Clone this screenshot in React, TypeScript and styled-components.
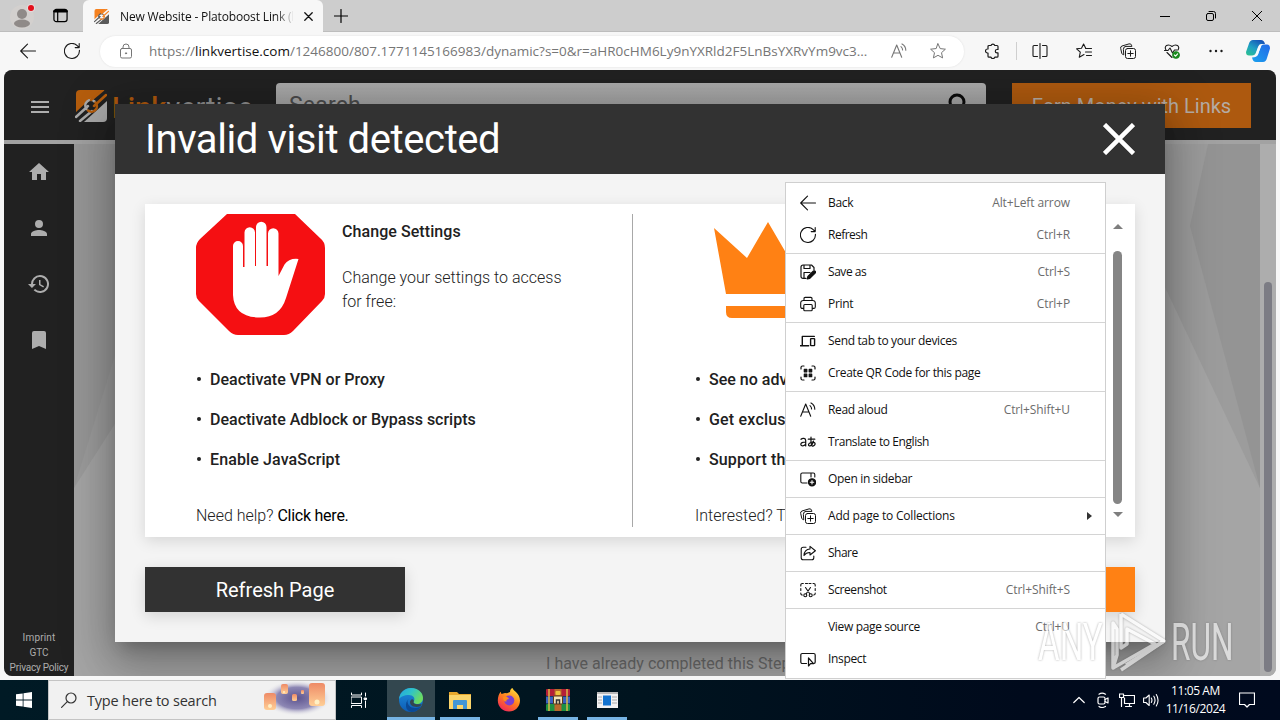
import * as React from 'react';
import styled, { createGlobalStyle, css } from 'styled-components';

/* ==================== [Style] ==================== */
const GlobalStyle=createGlobalStyle`
    *{
        box-sizing: border-box;
    }
    body{
        margin: 0;
        overflow: hidden;
        background-color: #f7f7f7;
        font-family: "Open Sans", "Noto Sans", sans-serif;
    }
    svg{
        display: block;
        flex: none;
    }
`;

const Screen=styled.div`
    position: relative;
    display: flex;
    flex-direction: column;
    width: 1280px;
    height: 720px;
    overflow: hidden;
`;

const Label=styled.span<{ $ls?: number }>`
    white-space: pre;
    letter-spacing: ${({ $ls=0 })=>$ls}px;
`;

const Slot=styled.div<{ $w: number }>`
    display: flex;
    flex: none;
    justify-content: center;
    align-items: center;
    width: ${({ $w })=>$w}px;
    height: 100%;
`;

/* ---------- tab strip ---------- */
const TabStrip=styled.div`
    display: flex;
    align-items: center;
    height: 32px;
    background-color: #cdcdcd;
    border-bottom: 1px solid #bdbdbd;
`;

const Tab=styled.div`
    display: flex;
    align-items: center;
    align-self: flex-start;
    width: 240px;
    height: 32px;
    padding: 0 9px 0 11px;
    border-radius: 6px 6px 0 0;
    background-color: #f7f7f7;
    color: #111111;
    font-size: 12px;
`;

const TabTitle=styled(Label)`
    width: 173px;
    margin: 0 11px 0 11px;
    overflow: hidden;
    mask-image: linear-gradient(90deg, #000 155px, transparent 175px);
`;

const Spacer=styled.div`
    flex: 1;
`;

/* ---------- toolbar ---------- */
const Toolbar=styled.div`
    display: flex;
    align-items: center;
    height: 38px;
    padding-left: 6px;
    background-color: #f7f7f7;
    color: #1b1b1b;
`;

const AddressBar=styled.div`
    display: flex;
    align-items: center;
    width: 864px;
    height: 31px;
    margin: 0 7px 0 6px;
    padding-left: 6px;
    border-radius: 16px;
    background-color: #ffffff;
    box-shadow: 0 0 2px #dddddd;
    color: #767676;
    font-size: 13.5px;
    b{
        color: #111111;
        font-weight: 400;
    }
`;

const Url=styled(Label)`
    width: 730px;
    margin-left: 3px;
`;

const ToolbarRule=styled.div`
    width: 1px;
    height: 18px;
    margin: 0 1px;
    background-color: #cfcfcf;
`;

/* ---------- web page ---------- */
const Viewport=styled.div`
    position: relative;
    display: flex;
    flex-direction: column;
    height: 606px;
    margin: 0 4px 4px;
    border-radius: 8px;
    overflow: hidden;
    background-color: #a5a5a5;
    font-family: Roboto, sans-serif;
`;

const SiteHeader=styled.header`
    display: flex;
    align-items: center;
    height: 70px;
    padding-top: 1px;
    background-color: #212121;
`;

const Brand=styled.div`
    display: flex;
    align-items: center;
    width: 201px;
    color: #8e8e8e;
    font-size: 29px;
    b{
        color: #ad580e;
        font-weight: 500;
    }
`;

const BrandName=styled(Label)`
    margin-left: 5px;
    padding-top: 5px;
`;

const SearchField=styled.div`
    display: flex;
    justify-content: space-between;
    width: 710px;
    height: 45px;
    padding: 9px 17px 0 13px;
    border-radius: 4px;
    background: linear-gradient(#aaaaaa, #989898);
    color: #4b4b4b;
    font-size: 23px;
    line-height: 27px;
`;

const EarnButton=styled.button`
    width: 239px;
    height: 45px;
    margin-left: 26px;
    padding: 0;
    border: 0;
    background-color: #ad590f;
    color: #b5aca4;
    font-family: inherit;
    font-size: 20px;
`;

const ProgressStrip=styled.div`
    height: 4px;
    background-color: #a2a2a2;
`;

const Main=styled.div`
    display: flex;
    flex: 1;
`;

const Sidebar=styled.nav`
    display: flex;
    flex-direction: column;
    align-items: center;
    width: 70px;
    color: #adadad;
    background-color: #212121;
`;

const SideItem=styled.div`
    display: grid;
    place-items: center;
    height: 56px;
`;

const SideLink=styled.a`
    font-size: 10px;
    line-height: 15px;
    white-space: nowrap;
`;

const Canvas=styled.div`
    display: flex;
    flex: 1;
    flex-direction: column;
    justify-content: flex-end;
    background-color: #a5a5a5;
    position: relative;
    color: #6a6a6a;
    font-size: 16px;
`;

const Backdrop=styled.svg`
    position: absolute;
    inset: 0;
`;

const StepNote=styled.div`
    position: relative;
    padding: 0 0 3px 472px;
    line-height: 19px;
`;

const PageScroll=styled.div`
    display: flex;
    justify-content: center;
    width: 16px;
    padding-top: 138px;
    background-color: #adadad;
`;

const Thumb=styled.div<{ $w: number; $h: number; $color: string }>`
    width: ${({ $w })=>$w}px;
    height: ${({ $h })=>$h}px;
    border-radius: 5px;
    background-color: ${({ $color })=>$color};
`;

/* ---------- dialog ---------- */
const Dialog=styled.section`
    position: absolute;
    top: 34px;
    left: 111px;
    width: 1050px;
    height: 538px;
    background-color: #f4f4f4;
    box-shadow: 0 11px 15px -7px rgba(0,0,0,.2), 0 24px 38px 3px rgba(0,0,0,.14), 0 9px 46px 8px rgba(0,0,0,.22);
`;

const DialogHead=styled.div`
    display: flex;
    justify-content: space-between;
    align-items: center;
    height: 70px;
    padding: 0 30px;
    background-color: #323232;
    color: #ffffff;
    font-size: 40px;
`;

const DialogBody=styled.div`
    padding: 30px;
`;

const Card=styled.div`
    display: flex;
    height: 333px;
    padding: 10px;
    background-color: #ffffff;
    box-shadow: 0 4px 14px rgba(0,0,0,.12);
    color: #212121;
    font-size: 16px;
    font-weight: 300;
`;

const Choice=styled.div<{ $w: number; $pad: number }>`
    width: ${({ $w })=>$w}px;
    padding-left: ${({ $pad })=>$pad}px;
`;

const Hero=styled.div`
    display: flex;
    height: 121px;
    margin-bottom: 24px;
`;

const HeroText=styled.div`
    padding: 6px 0 0 17px;
    line-height: 24px;
    p{
        margin: 22px 0 0;
    }
`;

const Strong=styled(Label)`
    font-weight: 500;
`;

const Points=styled.ul`
    margin: 0;
    padding: 0;
    list-style: none;
    li{
        display: flex;
        align-items: center;
        height: 40px;
    }
    li::before{
        content: "";
        width: 4px;
        height: 4px;
        margin: 0 9px 0 1px;
        border-radius: 50%;
        background-color: #212121;
    }
`;

const Help=styled.div`
    margin-top: 25px;
    line-height: 24px;
    white-space: nowrap;
    a{
        color: #000000;
        font-weight: 400;
        letter-spacing: -0.25px;
    }
`;

const Divider=styled.div`
    width: 1px;
    background-color: #a8a8a8;
`;

const CardScroll=styled.div`
    display: flex;
    flex-direction: column;
    align-items: center;
    width: 15px;
    margin-left: auto;
    padding-top: 10px;
`;

const Arrow=styled.i<{ $down?: boolean }>`
    border: 5px solid transparent;
    ${({ $down })=>$down
        ? css`border-top-color: #7e7e7e; border-bottom-width: 0; margin-top: 8px;`
        : css`border-bottom-color: #7e7e7e; border-top-width: 0; margin-bottom: 22px;`}
`;

const Actions=styled.div`
    display: flex;
    justify-content: space-between;
    margin-top: 30px;
`;

const ActionButton=styled.button<{ $bg: string }>`
    width: 260px;
    height: 45px;
    padding: 0;
    border: 0;
    background-color: ${({ $bg })=>$bg};
    box-shadow: 0 4px 14px rgba(0,0,0,.14);
    color: #ffffff;
    font-family: inherit;
    font-size: 20px;
`;

/* ---------- context menu ---------- */
const Menu=styled.div`
    position: absolute;
    top: 182px;
    left: 785px;
    width: 321px;
    height: 497px;
    padding: 4px 0;
    border: 1px solid #cfcfcf;
    background-color: #ffffff;
    color: #111111;
    font-size: 12px;
`;

const MenuRow=styled.div`
    display: flex;
    align-items: center;
    height: 32px;
    padding: 0 35px 0 14px;
`;

const MenuIcon=styled.div`
    width: 28px;
`;

const MenuLabel=styled(Label)`
    padding-bottom: 2px;
`;

const Shortcut=styled(Label)`
    margin-left: auto;
    padding-bottom: 2px;
    color: #6c6c6c;
`;

const SubArrow=styled.i`
    margin-left: auto;
    margin-right: -26px;
    border: 4px solid transparent;
    border-left: 5px solid #333333;
`;

const MenuRule=styled.div`
    height: 5px;
    padding-top: 2px;
    &::before{
        content: "";
        display: block;
        height: 1px;
        background-color: #d4d4d4;
    }
`;

/* ---------- taskbar ---------- */
const Taskbar=styled.div`
    display: flex;
    align-items: center;
    height: 40px;
    background: linear-gradient(90deg, #001a25, #00141f 50%, #000a1c 80%, #000a1e);
    color: #ffffff;
`;

const TaskSearch=styled.div`
    display: flex;
    align-items: center;
    width: 288px;
    height: 40px;
    padding-left: 12px;
    border: 1px solid #c4c4c4;
    background-color: #f1f1f1;
    color: #333333;
    font-size: 14.5px;
`;

const TaskApp=styled.div<{ $active?: boolean; $line?: boolean }>`
    display: flex;
    justify-content: center;
    align-items: center;
    width: ${({ $active })=>$active ? 48 : 40}px;
    height: 40px;
    margin: 0 ${({ $active })=>$active ? 5 : 9}px 0 0;
    padding-top: ${({ $line })=>$line ? 3 : 0}px;
    border-bottom: ${({ $line })=>$line ? '3px solid #76b4e4' : '0'};
    background-color: ${({ $active })=>$active ? '#33474f' : 'transparent'};
`;

const Clock=styled.div`
    width: 65px;
    font-size: 12px;
    line-height: 18px;
    text-align: center;
`;

/* ---------- watermark ---------- */
const Watermark=styled.div`
    position: absolute;
    top: 610px;
    left: 1038px;
    display: flex;
    align-items: center;
    width: 200px;
    height: 62px;
    opacity: .6;
    color: #ffffff;
    filter: drop-shadow(0 0 1px rgba(90,90,90,.8));
    font-family: Roboto, sans-serif;
    font-size: 51px;
    line-height: 62px;
`;

const MarkWord=styled.div<{ $w: number; $x: number }>`
    width: ${({ $w })=>$w}px;
    padding-top: 3px;
    span{
        display: inline-block;
        transform: scaleX(${({ $x })=>$x});
        transform-origin: 0 0;
    }
`;

/* ==================== [Icons] ==================== */
interface IconProps {
    size?: number;
    box?: number;
    stroke?: number;
    fill?: string;
    children?: React.ReactNode;
}
const Icon=({ size=16, box=16, stroke=1, fill='none', children }: IconProps)=>(
    <svg width={size} height={size} viewBox={`0 0 ${box} ${box}`} fill={fill}
        stroke={stroke ? 'currentColor' : 'none'} strokeWidth={stroke} strokeLinecap="round" strokeLinejoin="round">
        {children}
    </svg>
);

const BackIcon=()=><Icon stroke={1.1}><path d="M15.5 8H.8M7.5 1.2.7 8l6.8 6.8"/></Icon>;
const RefreshIcon=()=><Icon stroke={1.1}><path d="M15.4 7.2A7.5 7.5 0 1 1 13.2 2.6L15 4.4M15.2.6v4h-4"/></Icon>;
const CollectionsIcon=()=>(
    <Icon>
        <rect x="5.5" y="5.5" width="10" height="10" rx="2"/>
        <path d="M10.5 7.8v5.4M7.8 10.5h5.4M3.400 11.700C2.200 11.500 1.900 10.800 1.700 10L.7 5.400A2 2 0 0 1 2 3L9 .9a2 2 0 0 1 2.500 1.300l.4 1.200H6A2.600 2.600 0 0 0 3.400 6z"/>
    </Icon>
);
const ReadIcon=()=><Icon stroke={1.1}><path d="M.7 14.2 5.7 2l5 12.2M2.4 10h6.6M10 3.6c1 .8 1.6 2 1.6 3.4M11 .9c2.200 1.200 3.800 3.400 3.800 6.300"/></Icon>;

const menuIcons: Record<string, React.ReactNode>={
    back: <BackIcon/>,
    refresh: <RefreshIcon/>,
    save: (
        <Icon stroke={1.2}>
            <path d="M6 14.4H3a2 2 0 0 1-2-2V3a2 2 0 0 1 2-2h8.5L14 3.500V6M4 1v3.500h6V1M4 14V8.500h6"/>
            <path d="m7.300 15 .6-2.600 5.300-5.200a1 1 0 0 1 1.900 1.900L9.800 14.300z" fill="currentColor"/>
        </Icon>
    ),
    print: <Icon stroke={1.1}><path d="M4 4.500V2.600A1.200 1.200 0 0 1 5.200 1.400h5.600A1.200 1.200 0 0 1 12 2.600v1.900M3.500 12.400H2.300A1.500 1.500 0 0 1 .7 11V7a2.500 2.500 0 0 1 2.500-2.500h9.600A2.500 2.500 0 0 1 15.300 7v4a1.500 1.500 0 0 1-1.500 1.400h-1.300"/><rect x="3.800" y="8.500" width="8.400" height="6.200" rx="1"/></Icon>,
    send: <Icon stroke={1.400}><path d="M2.300 12V3.400h12M.4 12.700h8.300"/><rect x="10.600" y="5.600" width="4" height="7" rx=".5"/></Icon>,
    qr: (
        <Icon stroke={1.200}>
            <path d="M1 4V2.500A1.500 1.500 0 0 1 2.500 1H4M12 1h1.500A1.500 1.500 0 0 1 15 2.500V4M15 12v1.500a1.500 1.500 0 0 1-1.500 1.500H12M4 15H2.500A1.500 1.500 0 0 1 1 13.500V12"/>
            <path d="M4.300 4.300h2.500v2.500H4.300zM9.200 4.300h2.500v2.500H9.200zM4.300 9.200h2.500v2.500H4.300zM9.200 9.200h2.500v2.500H9.200z" fill="currentColor"/>
        </Icon>
    ),
    read: <ReadIcon/>,
    translate: (
        <Icon stroke={1.200}>
            <path d="M1 5.300c1.500-1.400 4.700-1.300 4.700 1.200V12M5.700 8C2.500 8 .8 8.800.8 10.300c0 2.300 3.800 2 4.900-.3"/>
            <path d="M8.300 5.200h6.500M11 3.200c-.3 4 0 6.300.6 8.300M13.600 7c-1 3.200-3 5.200-4.500 4.800-1.800-.8.6-3.800 3.500-3.800 3.600.2 3.200 3.800-.3 4.200"/>
        </Icon>
    ),
    sidebar: (
        <Icon stroke={1.100}>
            <path d="M7 12H2.300A1.500 1.500 0 0 1 .8 10.500v-7A1.500 1.500 0 0 1 2.300 2h11A1.500 1.500 0 0 1 14.800 3.500V6M11 2v4"/>
            <circle cx="12" cy="11.300" r="3.600" fill="currentColor"/>
            <path d="M12 9.600v3.400M10.300 11.300h3.400" stroke="#fff"/>
        </Icon>
    ),
    collections: <CollectionsIcon/>,
    share: <Icon stroke={1.100}><path d="M6 2.300H3.200A2 2 0 0 0 1.200 4.300v8.400a2 2 0 0 0 2 2h8.600a2 2 0 0 0 2-2V11M10 1.400l5.400 4.300L10 10V7.500C7 7.400 5.500 8.400 4 10.500 4.200 6.500 6 4.200 10 4z"/></Icon>,
    shot: (
        <Icon stroke={1.100}>
            <path d="M.8 4V3A1.500 1.500 0 0 1 2.300 1.500h1M5.500 1.500h2M9 1.500h2M13 1.500h.7A1.500 1.500 0 0 1 15.200 3v1M15.200 6.500v2M15.200 11v.5a1.500 1.500 0 0 1-1.500 1.500M.8 6.500v2M.8 11v.5A1.500 1.500 0 0 0 2.300 13M5.500 5.500l4.300 6.300M10.500 5.500l-4.300 6.300"/>
            <circle cx="5.300" cy="13.200" r="1.500"/><circle cx="10.700" cy="13.200" r="1.500"/>
        </Icon>
    ),
    inspect: <Icon stroke={1.200}><path d="M6.500 12.500H2.300A1.500 1.500 0 0 1 .8 11V4a1.500 1.500 0 0 1 1.500-1.500h11.400A1.500 1.500 0 0 1 15.200 4v7a1.500 1.500 0 0 1-1.200 1.500M8.500 7v8l2-2.300h3z"/></Icon>,
};

interface BrandMarkProps {
    size: number;
    dim?: boolean;
}
const BrandMark=({ size, dim }: BrandMarkProps)=>{
    const orange=dim ? '#b55d0d' : '#f5811f';
    const grey=dim ? '#a9a9a9' : '#5a5a5a';
    const gap=dim ? '#212121' : '#f7f7f7';
    return (
        <Icon size={size} box={32} stroke={0}>
            <path d="M5 0h22L1 23V4q0-4 4-4z" fill={orange}/>
            <path d="M32 11v17q0 4-4 4H9z" fill={grey}/>
            <g fill="none" strokeWidth="6">
                <path d="m0 27 13-12M31 6 19 17" stroke={gap}/>
            </g>
            <g fill="none" strokeWidth="2.500">
                <path d="M1 27 13 16M11.500 19a5.500 5.500 0 0 1 8-7.500M5 31l12-10" stroke={grey}/>
                <path d="m19 16 12-11M20.500 12.500a5.500 5.500 0 0 1-7.500 8M16 10 28 0" stroke={orange}/>
            </g>
        </Icon>
    );
};

const StopHand=()=>(
    <svg width="129" height="121" viewBox="0 0 129 121">
        <path d="M31 0h68l25 24q5 4 5 10v46q0 4-3 7L97 117q-4 4-9 4H42q-5 0-9-4L3 87q-3-3-3-7V34q0-5 4-9z" fill="#f50f12"/>
        <path d="M37 81V32a5 5 0 0 1 10 0v21h1.500V18.500a5 5 0 0 1 10.500 0V52h1V13a5.200 5.200 0 0 1 10.500 0v39H72V19.500a5.200 5.200 0 0 1 10.500 0V62l6-11.500Q93 44 102.500 45L90 84q-6 19.500-26 19.500Q38 103.500 37 81z" fill="#fff"/>
    </svg>
);

const Crown=()=>(
    <svg width="106" height="97" viewBox="0 0 106 97">
        <path d="M0 6 33 36 54 0l21 36 33-30-12 66H12zM12 84h84v6q0 6-6 6H18q-6 0-6-6z" fill="#ff8114"/>
    </svg>
);

const CopilotIcon=()=>(
    <svg width="24" height="24" viewBox="0 0 24 24">
        <defs>
            <linearGradient id="cpA" x1="0" y1="1" x2=".7" y2="0"><stop offset="0" stopColor="#2cc48c"/><stop offset=".5" stopColor="#1fa0c4"/><stop offset="1" stopColor="#1555b8"/></linearGradient>
            <linearGradient id="cpB" x1="0" y1="1" x2="1" y2="0"><stop offset="0" stopColor="#1ba2ee"/><stop offset="1" stopColor="#2369e8"/></linearGradient>
        </defs>
        <path d="M7 1h8q3 0 4 4h-4q-2 0-3 3l-2 5.500q-1 3-4 3H3q-3 0-3-3.500L3 4.500Q4 1 7 1z" fill="url(#cpA)"/>
        <path d="M17 23h-7q-3 0-4-4.500 5 0 6-3l2-6Q15 5.500 18 5.500h3q3 0 3 4l-3 9.500q-1 4-4 4z" fill="url(#cpB)"/>
        <path d="M12 9q.5-2.500 3.500-2.500L12.500 14q-.5 3-3.500 3z" fill="#f4fbff"/>
    </svg>
);

const Lanterns=()=>(
    <svg width="70" height="38" viewBox="0 0 70 38">
        <defs>
            <radialGradient id="sky"><stop offset="0" stopColor="#5d548f"/><stop offset=".6" stopColor="#8d87b4"/><stop offset="1" stopColor="#f1f1f1" stopOpacity="0"/></radialGradient>
            <linearGradient id="lamp" x1="0" y1="0" x2="0" y2="1"><stop offset="0" stopColor="#ee8a66"/><stop offset="1" stopColor="#ffcf96"/></linearGradient>
        </defs>
        <ellipse cx="34" cy="17" rx="34" ry="18" fill="url(#sky)"/>
        <g fill="url(#lamp)">
            <rect x="1" y="12" width="12" height="17" rx="3"/>
            <rect x="18" y="3" width="7" height="10" rx="2"/>
            <rect x="29" y="13" width="5" height="7" rx="1.500"/>
            <rect x="38" y="9" width="3" height="4" rx="1"/>
            <rect x="46" y="2" width="16" height="23" rx="3"/>
        </g>
        <g fill="#fff0c4">
            <circle cx="7" cy="25" r="2"/>
            <circle cx="21" cy="11" r="1"/>
            <circle cx="54" cy="21" r="2.500"/>
        </g>
    </svg>
);

const EdgeIcon=()=>(
    <svg width="24" height="24" viewBox="0 0 24 24">
        <defs>
            <linearGradient id="edA" x1="0" y1="0" x2="1" y2=".5"><stop offset="0" stopColor="#24a5e0"/><stop offset=".5" stopColor="#2fc3c9"/><stop offset="1" stopColor="#6ddc5f"/></linearGradient>
            <linearGradient id="edB" x1="0" y1="0" x2="0" y2="1"><stop offset="0" stopColor="#1f8fdc"/><stop offset="1" stopColor="#0d5cb5"/></linearGradient>
        </defs>
        <circle cx="12" cy="12" r="12" fill="url(#edB)"/>
        <path d="M0 11C1 4 6 0 12 0c7 0 12 4.500 12 10 0 4-3 6-6 6-2.500 0-4-1-3.500-2.200C17 10 14 7 10 7 5 7 1.500 9 0 11z" fill="url(#edA)"/>
        <path d="M8.500 13c0 6 6 9 13.500 5.500C19 22.500 16 24 12.500 24 6 23 5.500 15 9.500 11z" fill="#0b4a96"/>
        <path d="M14.800 13.200c-.8 1.500.2 3 4 3h4l-1.500 2c-5.500 2-10.300-.5-10.300-4 0-1.500.8-2.500 2-3 1.300 0 2 1 1.800 2z" fill="#33474f"/>
    </svg>
);

const FolderIcon=()=>(
    <svg width="22" height="19" viewBox="0 0 22 19">
        <path d="M0 1h8l2 2h12v14H0z" fill="#e8a82c"/>
        <path d="M0 4h22v14H0z" fill="#fbd56b"/>
        <path d="M4 10q0-1 1-1h12q1 0 1 1v8h-4v-4H8v4H4z" fill="#4296d6"/>
    </svg>
);

const FirefoxIcon=()=>(
    <svg width="24" height="24" viewBox="0 0 24 24">
        <defs>
            <linearGradient id="ff" x1=".8" y1="0" x2=".2" y2="1"><stop offset="0" stopColor="#ffe13c"/><stop offset=".5" stopColor="#ff7c1f"/><stop offset="1" stopColor="#f0215e"/></linearGradient>
        </defs>
        <path d="M13 4c0-2 1-3.500 2.500-4 .5 3 7.500 5 7.500 12.500C23 19 18 23.500 12 23.500S.8 19 .8 12.500C.8 9 2 6 3.600 3.800L4.500 6 8 5l2 .3z" fill="url(#ff)"/>
        <circle cx="12.300" cy="12.500" r="5" fill="#7b3fd0"/>
        <path d="M6 9c3-1 5 0 6 2-2 0-3 1-2.500 2.500C7 14 6 12 6 9z" fill="#ff8a1c"/>
    </svg>
);

const RarIcon=()=>(
    <svg width="24" height="22" viewBox="0 0 24 22">
        <rect width="24" height="7" rx="1" fill="#b51f38"/>
        <rect y="7.500" width="24" height="7" fill="#3a62c0"/>
        <rect y="15" width="24" height="7" rx="1" fill="#1e9142"/>
        <path d="M3 0v22M21 0v22" stroke="#d9b84a" strokeWidth="1.500"/>
        <rect x="8.500" width="7" height="22" fill="#b8692c"/>
        <rect x="7.500" y="7" width="9" height="8" rx="1" fill="#f3e2b8" stroke="#5c3a12"/>
        <path d="M10.500 15v-4h3v4" stroke="#333" fill="none" strokeWidth="1.500"/>
        <rect x="9.500" y="2" width="5" height="4" rx="1" fill="#f0c23c"/>
    </svg>
);

const WindowAppIcon=()=>(
    <svg width="21" height="16" viewBox="0 0 21 16">
        <rect width="21" height="16" fill="#f2f2f2"/>
        <rect width="21" height="2" fill="#b9b9b9"/>
        <path d="M1 5h4M1 8h4M1 11h4M15 5h5M15 8h5M15 11h5" stroke="#aaa"/>
        <rect x="6" y="3.500" width="8" height="10" fill="#1273cf"/>
    </svg>
);

/* ==================== [Browser] ==================== */
const BrowserTabs=()=>(
    <TabStrip>
        <Slot $w={44}>
            <svg width="34" height="26" viewBox="0 0 34 26">
                <circle cx="17" cy="14" r="12" fill="#d3d0ce"/>
                <circle cx="17" cy="11" r="5" fill="#8f8a88"/>
                <ellipse cx="17" cy="20.500" rx="8" ry="4" fill="#8f8a88"/>
                <circle cx="26" cy="5" r="4" fill="#e6dada"/>
                <circle cx="26" cy="5" r="3" fill="#e3101c"/>
            </svg>
        </Slot>
        <Slot $w={32}>
            <Icon stroke={1.300} size={15}><rect x="1" y="1.500" width="14" height="13" rx="2.500"/><path d="M1.500 3.500h13" strokeWidth="2.500"/><path d="M5 4.500V14"/></Icon>
        </Slot>
        <Slot $w={7}/>
        <Tab>
            <BrandMark size={15}/>
            <TabTitle $ls={-0.15}>New Website - Platoboost Link (l</TabTitle>
            <Icon size={9} box={9} stroke={1.300}><path d="m.8.8 7.400 7.400M8.200.8.800 8.200"/></Icon>
        </Tab>
        <Slot $w={35}>
            <Icon size={14} box={14} stroke={1.200}><path d="M7 .5v13M.5 7h13"/></Icon>
        </Slot>
        <Spacer/>
        <Slot $w={46}><Icon size={10} box={10}><path d="M0 5.500h10"/></Icon></Slot>
        <Slot $w={46}><Icon size={10} box={10}><rect x=".5" y="2.500" width="7" height="7" rx="1.500"/><path d="M3 .5h4.500a2 2 0 0 1 2 2V7"/></Icon></Slot>
        <Slot $w={46}><Icon size={10} box={10}><path d="m.3.3 9.400 9.400M9.700.3.300 9.700"/></Icon></Slot>
    </TabStrip>
);

const BrowserToolbar=()=>(
    <Toolbar>
        <Slot $w={44}><BackIcon/></Slot>
        <Slot $w={44}><RefreshIcon/></Slot>
        <AddressBar>
            <Slot $w={40}>
                <Icon><rect x="2.500" y="5.500" width="11" height="9.500" rx="1.500"/><path d="M5 5.500V4a3 3 0 0 1 6 0v1.500"/><circle cx="8" cy="10.300" r=".6" fill="currentColor"/></Icon>
            </Slot>
            <Url>https://<b>linkvertise.com</b>/1246800/807.1771145166983/dynamic?s=0&amp;r=aHR0cHM6Ly9nYXRld2F5LnBsYXRvYm9vc3...</Url>
            <Slot $w={40}><ReadIcon/></Slot>
            <Slot $w={37}><Icon><path d="m8 .8 2.200 4.800 5.200.6-3.900 3.500 1.100 5.200L8 12.300l-4.600 2.600 1.100-5.200L.6 6.200l5.200-.6z"/></Icon></Slot>
        </AddressBar>
        <Slot $w={44}>
            <Icon stroke={1.200}><path d="M3 4.500V3.500a1 1 0 0 1 1-1h2a2 2 0 0 1 3.800 0H12a1 1 0 0 1 1 1v3h-1a1.700 1.700 0 0 0 0 3.400h1v3.300a1 1 0 0 1-1 1H9.800a2 2 0 0 1-3.800 0H4a1 1 0 0 1-1-1V10H2.500a2 2 0 0 1 0-4H3z"/></Icon>
        </Slot>
        <ToolbarRule/>
        <Slot $w={44}><Icon stroke={1.100}><path d="M8 .5v15M5.500 2.500H2a1 1 0 0 0-1 1v9a1 1 0 0 0 1 1h3.500M10.500 2.500H14a1 1 0 0 1 1 1v9a1 1 0 0 1-1 1h-3.500"/></Icon></Slot>
        <Slot $w={44}><Icon stroke={1.1}><path d="M8 11.500 3.300 14.200l1-5L.6 5.800l4.900-.6L7.600 1l2.100 4.200M9.500 5.500h6M9.500 9h6M10.500 12.500h5"/></Icon></Slot>
        <Slot $w={44}><CollectionsIcon/></Slot>
        <Slot $w={44}>
            <Icon stroke={1.1}>
                <path d="M2 7C-.5 3 4 .2 8 3.500 12 .2 16.500 3 14 7M.5 7.500H4L6 5l2.500 5L10.500 7H13M3 9.500l5 5"/>
                <circle cx="12" cy="12" r="3.600" fill="#1a8a1f" stroke="#1a8a1f" strokeWidth=".6"/>
                <path d="m10.400 12 1.200 1.200 2-2.300" stroke="#fff"/>
            </Icon>
        </Slot>
        <Slot $w={44}><Icon stroke={0} fill="#1b1b1b"><circle cx="2.500" cy="8" r="1.200"/><circle cx="8" cy="8" r="1.200"/><circle cx="13.500" cy="8" r="1.200"/></Icon></Slot>
        <Slot $w={39}><CopilotIcon/></Slot>
    </Toolbar>
);

/* ==================== [Page] ==================== */
const Header=()=>(
    <SiteHeader>
        <Slot $w={71}>
            <Icon size={18} box={18} stroke={1.800}><path d="M0 5h18M0 10h18M0 15h18" strokeLinecap="butt" stroke="#adadad"/></Icon>
        </Slot>
        <Brand>
            <BrandMark size={32} dim/>
            <BrandName><b>Link</b>vertise</BrandName>
        </Brand>
        <SearchField>
            <Label $ls={0.2}>Search</Label>
            <svg width="22" height="22" viewBox="0 0 22 22" fill="none" stroke="#0c0c0c" strokeWidth="3"><circle cx="10" cy="10" r="7"/><path d="m15 15 6 6"/></svg>
        </SearchField>
        <EarnButton>Earn Money with Links</EarnButton>
    </SiteHeader>
);

const SideNav=()=>(
    <Sidebar>
        <SideItem><Icon size={24} box={24} stroke={0} fill="currentColor"><path d="M10 20v-6h4v6h5v-8h3L12 3 2 12h3v8z"/></Icon></SideItem>
        <SideItem><Icon size={24} box={24} stroke={0} fill="currentColor"><path d="M12 12a4 4 0 1 0 0-8 4 4 0 0 0 0 8zm0 2c-2.700 0-8 1.300-8 4v2h16v-2c0-2.700-5.300-4-8-4z"/></Icon></SideItem>
        <SideItem><Icon size={24} box={24} stroke={0} fill="currentColor"><path d="M13 3a9 9 0 0 0-9 9H1l3.900 3.900.07.14L9 12H6a7 7 0 1 1 2.060 4.940l-1.420 1.420A9 9 0 1 0 13 3zm-1 5v5l4.280 2.540.72-1.210-3.500-2.080V8z"/></Icon></SideItem>
        <SideItem><Icon size={24} box={24} stroke={0} fill="currentColor"><path d="M17 3H7a2 2 0 0 0-2 2v16l7-3 7 3V5a2 2 0 0 0-2-2z"/></Icon></SideItem>
        <Spacer/>
        <SideLink><Label $ls={0.15}>Imprint</Label></SideLink>
        <SideLink>GTC</SideLink>
        <SideLink style={{ marginBottom: 1 }}><Label $ls={-0.2}>Privacy Policy</Label></SideLink>
    </Sidebar>
);

const InvalidVisitDialog=()=>(
    <Dialog>
        <DialogHead>
            <Label $ls={-0.4}>Invalid visit detected</Label>
            <svg width="32" height="32" viewBox="0 0 32 32" stroke="#fff" strokeWidth="4.500"><path d="m1.500 1.500 29 29M30.500 1.500l-29 29"/></svg>
        </DialogHead>
        <DialogBody>
            <Card>
                <Choice $w={477} $pad={41}>
                    <Hero>
                        <StopHand/>
                        <HeroText>
                            <Strong $ls={0.07}>Change Settings</Strong>
                            <p><Label>{'Change your settings to access\nfor free:'}</Label></p>
                        </HeroText>
                    </Hero>
                    <Points>
                        <li><Strong>Deactivate VPN or Proxy</Strong></li>
                        <li><Strong>Deactivate Adblock or Bypass scripts</Strong></li>
                        <li><Strong $ls={0.12}>Enable JavaScript</Strong></li>
                    </Points>
                    <Help>Need help? <a>Click here.</a></Help>
                </Choice>
                <Divider/>
                <Choice $w={440} $pad={62}>
                    <Hero style={{ padding: '8px 0 0 19px' }}><Crown/></Hero>
                    <Points>
                        <li><Strong>See no advertisements</Strong></li>
                        <li><Strong $ls={0.2}>Get exclusive features</Strong></li>
                        <li><Strong $ls={0.12}>Support the creators</Strong></li>
                    </Points>
                    <Help>Interested? Try it now.</Help>
                </Choice>
                <CardScroll>
                    <Arrow/>
                    <Thumb $w={9} $h={253} $color="#858585"/>
                    <Arrow $down/>
                </CardScroll>
            </Card>
            <Actions>
                <ActionButton $bg="#323232">Refresh Page</ActionButton>
                <ActionButton $bg="#ff8114"/>
            </Actions>
        </DialogBody>
    </Dialog>
);

const Page=()=>(
    <Viewport>
        <Header/>
        <ProgressStrip/>
        <Main>
            <SideNav/>
            <Canvas>
                <Backdrop width="1186" height="532">
                    <path d="M0 0h60v250L0 344z" fill="#9c9c9c"/>
                    <path d="M0 0h60v150L0 344z" fill="#979797"/>
                    <path d="M1040 0h146v344L1080 120z" fill="#9c9c9c"/>
                    <path d="M1134 0h52v344L1116 82z" fill="#949494"/>
                </Backdrop>
                <StepNote><Label $ls={0.03}>I have already completed this Step</Label></StepNote>
            </Canvas>
            <PageScroll><Thumb $w={8} $h={390} $color="#7c7c84"/></PageScroll>
        </Main>
        <InvalidVisitDialog/>
    </Viewport>
);

/* ==================== [Context menu] ==================== */
interface MenuEntry {
    icon?: string;
    text: string;
    keys?: string;
    sub?: boolean;
    ls?: number;
}
const menuGroups: MenuEntry[][]=[
    [
        { icon: 'back', text: 'Back', keys: 'Alt+Left arrow' },
        { icon: 'refresh', text: 'Refresh', keys: 'Ctrl+R', ls: -0.5 },
    ],
    [
        { icon: 'save', text: 'Save as', keys: 'Ctrl+S', ls: -0.45 },
        { icon: 'print', text: 'Print', keys: 'Ctrl+P' },
    ],
    [
        { icon: 'send', text: 'Send tab to your devices' },
        { icon: 'qr', text: 'Create QR Code for this page' },
    ],
    [
        { icon: 'read', text: 'Read aloud', keys: 'Ctrl+Shift+U' },
        { icon: 'translate', text: 'Translate to English', ls: -0.42 },
    ],
    [{ icon: 'sidebar', text: 'Open in sidebar' }],
    [{ icon: 'collections', text: 'Add page to Collections', sub: true, ls: -0.2 }],
    [{ icon: 'share', text: 'Share', ls: -0.5 }],
    [{ icon: 'shot', text: 'Screenshot', keys: 'Ctrl+Shift+S', ls: -0.4 }],
    [
        { text: 'View page source', keys: 'Ctrl+U' },
        { icon: 'inspect', text: 'Inspect' },
    ],
];

const ContextMenu=()=>(
    <Menu>
        {menuGroups.map((group, index)=>(
            <React.Fragment key={index}>
                {index>0 && <MenuRule/>}
                {group.map(({ icon, text, keys, sub, ls=-0.34 })=>(
                    <MenuRow key={text}>
                        <MenuIcon>{icon && menuIcons[icon]}</MenuIcon>
                        <MenuLabel $ls={ls}>{text}</MenuLabel>
                        {keys && <Shortcut $ls={-0.1}>{keys}</Shortcut>}
                        {sub && <SubArrow/>}
                    </MenuRow>
                ))}
            </React.Fragment>
        ))}
    </Menu>
);

/* ==================== [Taskbar] ==================== */
const WindowsTaskbar=()=>(
    <Taskbar>
        <Slot $w={48}>
            <Icon stroke={0} fill="#fff"><path d="M0 2.300 6.700 1.400v6.200H0zM7.500 1.300 16 0v7.600H7.500zM0 8.400h6.700v6.200L0 13.700zM7.500 8.400H16V16l-8.500-1.300z"/></Icon>
        </Slot>
        <TaskSearch>
            <Icon stroke={1.200}><circle cx="10" cy="6" r="5"/><path d="M6.300 9.700.6 15.400"/></Icon>
            <Label $ls={-0.2} style={{ width: 176, marginLeft: 10 }}>Type here to search</Label>
            <Lanterns/>
        </TaskSearch>
        <Slot $w={46}>
            <Icon><path d="M.5 1v2h10V1M.5 15.500v-2h10v2M.5 5h10v6.500H.500zM14.500 1v3M14.500 9v6.500"/><path d="M13.500 6h2v1.500h-2z" fill="currentColor"/></Icon>
        </Slot>
        <TaskApp $active $line style={{ marginLeft: 5 }}><EdgeIcon/></TaskApp>
        <TaskApp $line><FolderIcon/></TaskApp>
        <TaskApp><FirefoxIcon/></TaskApp>
        <TaskApp $line><RarIcon/></TaskApp>
        <TaskApp $line><WindowAppIcon/></TaskApp>
        <Spacer/>
        <Slot $w={24}><Icon size={12} box={12} stroke={1.200}><path d="m.8 8.500 5.200-5 5.200 5"/></Icon></Slot>
        <Slot $w={24}><Icon stroke={1.200}><rect x="3" y="5" width="7" height="7" rx="1.500"/><path d="m10 7.500 3-1.500v5l-3-1.500M4 2.200q3-2 6.500 0M4 14.500q3 2 6.500 0"/></Icon></Slot>
        <Slot $w={24}><Icon stroke={1.200}><path d="M5.500 3.500h10v8h-10V6M10.500 11.500v3M6.500 14.500h6M.5 2h4v3.500h-4zM2.500 5.500v9"/></Icon></Slot>
        <Slot $w={24}><Icon stroke={1.100}><path d="M.6 6v4.500h2.300l3.300 3V3L2.900 6zM8.300 6q1.300 2.200 0 4.500M10.800 4.200q2.500 4 0 8M13.300 2.500q3.500 5.700 0 11.500"/></Icon></Slot>
        <Clock>
            <Label $ls={-0.4}>11:05 AM</Label><br/>
            <Label $ls={-0.4}>11/16/2024</Label>
        </Clock>
        <Slot $w={38}><Icon stroke={1.200}><path d="M.5 1h15v11.500h-5L8 15l-2.500-2.500h-5z"/></Icon></Slot>
        <Slot $w={14}/>
    </Taskbar>
);

const AnyRun=()=>(
    <Watermark>
        <MarkWord $w={71} $x={0.65}><span>ANY</span></MarkWord>
        <svg width="62" height="62" viewBox="0 0 62 62" fill="none" stroke="#fff" strokeWidth="3.500" strokeLinejoin="round">
            <path d="m4 13 4 6v26l-4 13zM12 4l43 27-38 24"/>
            <path d="M12 4v34l6-4V19l28 15L4 58M12 60l43-29"/>
        </svg>
        <MarkWord $w={62} $x={0.62}><span>RUN</span></MarkWord>
    </Watermark>
);

const App=()=>(
    <Screen>
        <GlobalStyle/>
        <BrowserTabs/>
        <BrowserToolbar/>
        <Page/>
        <WindowsTaskbar/>
        <ContextMenu/>
        <AnyRun/>
    </Screen>
);

export default App;
